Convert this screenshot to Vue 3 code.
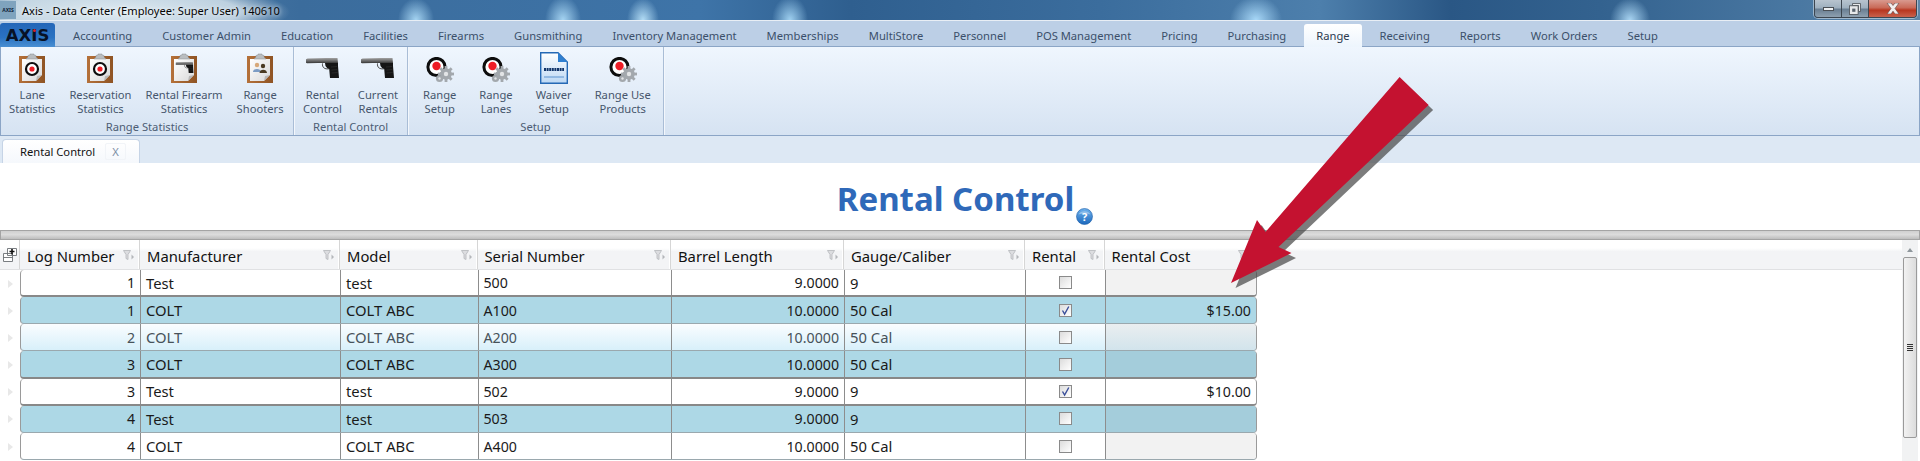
<template>
  <div class="app">
    <!-- shared icon symbols -->
    <svg class="defs" width="0" height="0" aria-hidden="true">
      <defs>
        <linearGradient id="board" x1="0" y1="0" x2="1" y2="0">
          <stop offset="0" stop-color="#b5713a" />
          <stop offset="1" stop-color="#8f5424" />
        </linearGradient>
        <linearGradient id="paper" x1="0" y1="0" x2="1" y2="1">
          <stop offset="0" stop-color="#ffffff" />
          <stop offset="1" stop-color="#d9d9d9" />
        </linearGradient>
        <linearGradient id="slide" x1="0" y1="0" x2="0" y2="1">
          <stop offset="0" stop-color="#a2a2a2" />
          <stop offset=".6" stop-color="#666" />
          <stop offset="1" stop-color="#333" />
        </linearGradient>
        <linearGradient id="doc" x1="0" y1="0" x2="0" y2="1">
          <stop offset="0" stop-color="#ffffff" />
          <stop offset="1" stop-color="#bcd8f4" />
        </linearGradient>
        <linearGradient id="help" x1="0" y1="0" x2="0" y2="1">
          <stop offset="0" stop-color="#6fb2ec" />
          <stop offset="1" stop-color="#1c68bd" />
        </linearGradient>
        <symbol id="clip-base" viewBox="0 0 26 30">
          <rect x="0" y="3" width="26" height="27" fill="url(#board)" />
          <path d="M3 6H23V22L17 28H3Z" fill="url(#paper)" />
          <path d="M23 22L17 28L18 23Z" fill="#b9b9b9" />
          <path d="M9 4V2.5L11 2V1H15V2L17 2.5V4L19 6H7Z" fill="#b9bdc0" stroke="#8a8d90" stroke-width=".5" />
        </symbol>
        <symbol id="gun" viewBox="0 0 33 20">
          <path d="M0 1.2L1.5 .4L20 0H31.5L32 5H12L1 5.2L0 4.8Z" fill="url(#slide)" />
          <path d="M19 5H32L32 8L33 20H24L23.2 11L21.5 10.5L19.5 8Z" fill="#151515" />
          <path d="M16.5 5.4C16 9.5 18.5 11.4 23 10.8" fill="none" stroke="#3a3a3a" stroke-width=".9" />
          <path d="M25 9L31 8.5M25.4 12L31.3 11.5M25.6 15L31.6 14.5" stroke="#333" stroke-width=".6" />
        </symbol>
        <symbol id="gear" viewBox="0 0 28 26">
          <circle cx="10.5" cy="10" r="8.6" fill="#fff" stroke="#0d0d0d" stroke-width="3" />
          <circle cx="10.5" cy="9" r="4.2" fill="#ee1c25" />
          <g fill="#a3a8ad">
            <circle cx="20" cy="17" r="5.8" />
            <circle cx="13.5" cy="21.5" r="3.6" />
            <rect x="18.6" y="9" width="2.8" height="16" />
            <rect x="12" y="15.6" width="16" height="2.8" />
            <rect x="18.6" y="9" width="2.8" height="16" transform="rotate(45 20 17)" />
            <rect x="18.6" y="9" width="2.8" height="16" transform="rotate(-45 20 17)" />
          </g>
          <circle cx="20" cy="17" r="2.2" fill="#e2e4e6" />
          <circle cx="13.5" cy="21.5" r="1.2" fill="#e2e4e6" />
        </symbol>
        <symbol id="funnel" viewBox="0 0 11 11">
          <path d="M.5 .5H7.5L5 4.5V9.5L3 8.5V4.5Z" fill="#dcdde0" stroke="#b4b6ba" stroke-width=".8" />
          <path d="M8.5 4.5L11 7L8.5 9.5Z" fill="#b4b6ba" />
        </symbol>
      </defs>
    </svg>

    <header class="titlebar">
      <span class="app-icon">AXIS</span>
      <span class="window-title">Axis - Data Center  (Employee: Super User) 140610</span>
      <div class="window-controls">
        <span class="ctl ctl--min"><i class="min-bar"></i></span>
        <span class="ctl ctl--max">
          <svg width="12" height="12" viewBox="0 0 12 12">
            <path d="M3.5 .5H11.5V8.5H9.5V2.5H3.5Z" fill="#e6e8ea" stroke="#4a4f55" stroke-width=".8" />
            <rect x=".5" y="2.8" width="8.6" height="8.6" fill="#e6e8ea" stroke="#4a4f55" stroke-width=".8" />
            <rect x="3.2" y="5.6" width="3.2" height="3.2" fill="#59636e" />
          </svg>
        </span>
        <span class="ctl ctl--close">
          <svg width="14" height="11" viewBox="0 0 14 11">
            <path d="M1 0H5L7 2.5L9 0H13L9 5.5L13 11H9L7 8.2L5 11H1L5 5.5Z" fill="#f2eeee" stroke="#5a4040" stroke-width=".6" />
          </svg>
        </span>
      </div>
    </header>

    <nav class="menu">
      <span class="logo-tab">AX<span class="logo-i">I</span>S</span>
      <span
        v-for="item in menuItems"
        :key="item"
        :class="['menu-item', { 'menu-item--active': item === 'Range' }]"
      >{{ item }}</span>
    </nav>

    <section class="ribbon">
      <div v-for="group in groups" :key="group.name" :class="['group', `group--${group.id}`]">
        <div class="group-buttons">
          <button v-for="btn in group.buttons" :key="btn.label" class="rb" type="button">
            <span class="rb-icon">
              <svg v-if="btn.icon === 'gun'" width="33" height="20" viewBox="0 0 33 20"><use href="#gun" /></svg>
              <svg v-else-if="btn.icon === 'gear'" width="28" height="26" viewBox="0 0 28 26" class="ico-gear"><use href="#gear" /></svg>
              <svg v-else-if="btn.icon === 'doc'" width="28" height="32" viewBox="0 0 28 32">
                <path d="M.7 .7H18L27.3 10V31.3H.7Z" fill="url(#doc)" stroke="#2569b5" stroke-width="1.4" />
                <path d="M18 .7V10H27.3Z" fill="#2f7fd0" />
                <path d="M4 17.5H24" stroke="#12356a" stroke-width="3" stroke-dasharray="2 .6" />
                <path d="M4 25H24" stroke="#5c94cf" stroke-width="1" />
              </svg>
              <svg v-else width="26" height="30" viewBox="0 0 26 30">
                <use href="#clip-base" width="26" height="30" />
                <template v-if="btn.icon === 'target'">
                  <circle cx="13" cy="16" r="6" fill="#fff" stroke="#0d0d0d" stroke-width="2.2" />
                  <circle cx="13" cy="16" r="2.6" fill="#ee1c25" />
                </template>
                <g v-else-if="btn.icon === 'clip-gun'" transform="translate(4.5 9) scale(.55)">
                  <use href="#gun" width="33" height="20" />
                </g>
                <g v-else>
                  <circle cx="10" cy="12" r="2.2" fill="#d8a878" />
                  <path d="M6 19C6 15 14 15 14 19Z" fill="#7c9cc4" />
                  <circle cx="16" cy="13" r="2.2" fill="#4a3a22" />
                  <path d="M12.5 20C12.5 15.5 20 15.5 20 20Z" fill="#4a3a22" />
                </g>
              </svg>
            </span>
            <span class="rb-label">{{ btn.label }}</span>
          </button>
        </div>
        <div class="group-name">{{ group.name }}</div>
      </div>
    </section>

    <div class="doc-tabs">
      <div class="doc-tab">
        <span>Rental Control</span>
        <span class="doc-close">X</span>
      </div>
    </div>

    <main class="content">
      <div class="page-title">
        <h1>Rental Control</h1>
        <svg class="help" width="17" height="17" viewBox="0 0 17 17">
          <circle cx="8.5" cy="8.5" r="8" fill="url(#help)" stroke="#1a5ca8" stroke-width=".6" />
          <path d="M2.5 6.5C4 2 13 2 14.5 6.5C11 5 6 5 2.5 6.5Z" fill="#fff" opacity=".35" />
          <text x="8.5" y="12.6" text-anchor="middle" class="help-q">?</text>
        </svg>
      </div>

      <div class="splitter"></div>

      <div class="grid-wrap">
        <div class="grid">
          <div class="grid-head">
            <div class="corner">
              <svg width="14" height="14" viewBox="0 0 14 14">
                <path d="M4.5 .5H13.5V7.5H4.5Z M.5 5.5H9.5V13.5H.5Z M.5 9.5H9.5" fill="#fff" stroke="#6b6f74" stroke-width=".9" />
                <path d="M9 1V6.5M6.5 3.5H11.5" stroke="#111" stroke-width="1.6" />
              </svg>
            </div>
            <div v-for="col in columns" :key="col" class="head-cell">
              <span>{{ col }}</span>
              <svg width="11" height="11" viewBox="0 0 11 11" class="funnel"><use href="#funnel" /></svg>
            </div>
          </div>

          <div v-for="(row, i) in rows" :key="i" class="grid-row">
            <div class="gutter"><i class="marker"></i></div>
            <div :class="['row', `row--${row.tone}`, `row--${row.edge}`]">
              <div class="cell cell--num">{{ row.log }}</div>
              <div class="cell">{{ row.maker }}</div>
              <div class="cell">{{ row.model }}</div>
              <div class="cell cell--digits">{{ row.serial }}</div>
              <div class="cell cell--num">{{ row.barrel }}</div>
              <div class="cell">{{ row.gauge }}</div>
              <div class="cell cell--check">
                <span class="check">
                  <svg v-if="row.rental" width="11" height="11" viewBox="0 0 11 11">
                    <path d="M2.5 5.5L4.6 9L8.8 1.5" fill="none" stroke="#3a4f9a" stroke-width="1.4" />
                  </svg>
                </span>
              </div>
              <div :class="['cell', 'cell--num', 'cell--cost', { 'cell--off': !row.cost }]">{{ row.cost }}</div>
            </div>
          </div>
        </div>

        <div class="scrollbar">
          <i class="sb-up"></i>
          <div class="sb-thumb"><i class="sb-grip"></i></div>
        </div>
      </div>
    </main>

    <!-- callout drawn on top of the screenshot -->
    <svg class="callout" width="1920" height="461" viewBox="0 0 1920 461">
      <polygon :points="arrow" fill="#4a4a4a" opacity=".72" transform="translate(4.5 5)" />
      <polygon :points="arrow" fill="#c41230" />
    </svg>
  </div>
</template>

<script setup>
const arrow = '1399.6,77 1428.6,105 1278.5,247 1291.5,253 1231,283 1257,220 1265.5,232'

const menuItems = [
  'Accounting', 'Customer Admin', 'Education', 'Facilities', 'Firearms', 'Gunsmithing',
  'Inventory Management', 'Memberships', 'MultiStore', 'Personnel', 'POS Management',
  'Pricing', 'Purchasing', 'Range', 'Receiving', 'Reports', 'Work Orders', 'Setup',
]

const groups = [
  {
    id: 'stats',
    name: 'Range Statistics',
    buttons: [
      { label: 'Lane\nStatistics', icon: 'target' },
      { label: 'Reservation\nStatistics', icon: 'target' },
      { label: 'Rental Firearm\nStatistics', icon: 'clip-gun' },
      { label: 'Range\nShooters', icon: 'people' },
    ],
  },
  {
    id: 'rental',
    name: 'Rental Control',
    buttons: [
      { label: 'Rental\nControl', icon: 'gun' },
      { label: 'Current\nRentals', icon: 'gun' },
    ],
  },
  {
    id: 'setup',
    name: 'Setup',
    buttons: [
      { label: 'Range\nSetup', icon: 'gear' },
      { label: 'Range\nLanes', icon: 'gear' },
      { label: 'Waiver\nSetup', icon: 'doc' },
      { label: 'Range Use\nProducts', icon: 'gear' },
    ],
  },
]

const columns = [
  'Log Number', 'Manufacturer', 'Model', 'Serial Number',
  'Barrel Length', 'Gauge/Caliber', 'Rental', 'Rental Cost',
]

const rows = [
  { log: 1, maker: 'Test', model: 'test', serial: '500', barrel: '9.0000', gauge: '9', rental: false, cost: '', tone: 'white', edge: 'heavy' },
  { log: 1, maker: 'COLT', model: 'COLT ABC', serial: 'A100', barrel: '10.0000', gauge: '50 Cal', rental: true, cost: '$15.00', tone: 'blue', edge: 'light' },
  { log: 2, maker: 'COLT', model: 'COLT ABC', serial: 'A200', barrel: '10.0000', gauge: '50 Cal', rental: false, cost: '', tone: 'hover', edge: 'light' },
  { log: 3, maker: 'COLT', model: 'COLT ABC', serial: 'A300', barrel: '10.0000', gauge: '50 Cal', rental: false, cost: '', tone: 'blue', edge: 'heavy' },
  { log: 3, maker: 'Test', model: 'test', serial: '502', barrel: '9.0000', gauge: '9', rental: true, cost: '$10.00', tone: 'white', edge: 'heavy' },
  { log: 4, maker: 'Test', model: 'test', serial: '503', barrel: '9.0000', gauge: '9', rental: false, cost: '', tone: 'blue', edge: 'light' },
  { log: 4, maker: 'COLT', model: 'COLT ABC', serial: 'A400', barrel: '10.0000', gauge: '50 Cal', rental: false, cost: '', tone: 'white', edge: 'light' },
]
</script>

<style>
html, body { margin: 0; background: #fff; overflow: hidden; }
</style>

<style scoped>
.app {
  --cols: 120px 200px 137.5px 193.5px 173px 181px 79.5px 150.5px;
  position: relative;
  width: 1920px;
  height: 461px;
  overflow: hidden;
  display: flex;
  flex-direction: column;
  font-family: "Noto Sans", "Open Sans", sans-serif;
  background: #fff;
}
.defs { position: absolute; }

/* window chrome */
.titlebar {
  height: 20px;
  flex: none;
  display: flex;
  align-items: center;
  border-bottom: 1px solid #e8eef5;
  background:
    radial-gradient(ellipse 18px 22px at 416px 100%, #a5d4f2 0, rgba(165,212,242,0) 100%),
    radial-gradient(ellipse 18px 24px at 563px 100%, #a5d4f2 0, rgba(165,212,242,0) 100%),
    radial-gradient(ellipse 16px 22px at 643px 100%, #b2dcf5 0, rgba(178,220,245,0) 100%),
    radial-gradient(ellipse 18px 24px at 790px 100%, #9fd0f0 0, rgba(159,208,240,0) 100%),
    radial-gradient(ellipse 26px 24px at 1256px 100%, #a8d8f8 0, rgba(168,216,248,0) 100%),
    radial-gradient(ellipse 20px 22px at 1630px 100%, #a8d4f2 0, rgba(168,212,242,0) 100%),
    radial-gradient(ellipse 170px 30px at 120px 60%, rgba(230,240,245,.95) 0, rgba(230,240,245,.75) 70%, rgba(230,240,245,0) 100%),
    linear-gradient(90deg, #5d88ad 0, #3b6c9c 300px, #3e74a8 700px, #2f5f8f 850px, #3b6d9d 1100px, #4d7fac 1320px, #2a5785 1450px, #33628f 1600px, #4a78a2 1800px, #5d86a8 1920px);
}
.app-icon {
  width: 16px;
  height: 18px;
  margin-right: 6px;
  background: #7fa3be;
  color: #10233a;
  font-size: 5px;
  font-weight: 700;
  line-height: 18px;
  text-align: center;
}
.window-title {
  font-size: 11.1px;
  white-space: pre;
  color: #050505;
  text-shadow: 0 0 4px #fff;
}
.window-controls {
  margin-left: auto;
  margin-right: 3px;
  align-self: flex-start;
  display: flex;
  height: 17px;
  border: 1px solid #3d4650;
  border-top: 0;
  border-radius: 0 0 4px 4px;
  box-shadow: 0 0 0 1px rgba(255,255,255,.45);
  overflow: hidden;
}
.ctl {
  display: flex;
  align-items: center;
  justify-content: center;
  height: 17px;
  box-sizing: border-box;
}
.ctl--min, .ctl--max {
  width: 27px;
  border-right: 1px solid #3d4650;
  background: linear-gradient(#b8c4cf 0, #9fb0bf 45%, #6a7f93 55%, #8ea0b0 100%);
}
.ctl--close {
  width: 47px;
  background: linear-gradient(#d99a8f 0, #c96a58 45%, #b8361f 60%, #c9614c 100%);
}
.min-bar {
  width: 11px;
  height: 4px;
  background: #eef0f2;
  border: 1px solid #4a4f55;
  box-sizing: border-box;
}

.menu {
  height: 26px;
  flex: none;
  box-sizing: border-box;
  display: flex;
  align-items: flex-end;
  background: #bccfe6;
  border-bottom: 1px solid #8ba5c6;
}
.logo-tab {
  width: 55px;
  height: 24px;
  margin: 0 3px -1px 0;
  box-sizing: border-box;
  border-radius: 3px 3px 0 0;
  background: linear-gradient(#2466b8, #2a72c2 60%, #4a8fd2);
  font-family: "DejaVu Sans", sans-serif;
  font-weight: 700;
  font-size: 16.5px;
  line-height: 26px;
  text-align: center;
  color: #081226;
}
.logo-i {
  position: relative;
}
.logo-i::before {
  content: "";
  position: absolute;
  left: 1.5px;
  top: 3px;
  width: 3px;
  height: 3px;
  border-radius: 50%;
  background: #d8232a;
}
.menu-item {
  height: 25px;
  padding: 0 15px;
  font-size: 11.2px;
  line-height: 29px;
  color: #3b4f6a;
  white-space: nowrap;
}
.menu-item--active {
  height: 23px;
  margin: 0 3px -1px;
  padding: 0 12px;
  line-height: 24px;
  border-radius: 3px 3px 0 0;
  background: linear-gradient(#fff, #edf5fd);
  color: #2c3a4e;
}

.ribbon {
  height: 89px;
  flex: none;
  box-sizing: border-box;
  display: flex;
  background: linear-gradient(#eff6fe, #d6e3f2);
  border-bottom: 1px solid #8ba5c6;
  border-right: 1px solid #8ba5c6;
  border-left: 1px solid #8ba5c6;
}
.group {
  display: flex;
  flex-direction: column;
  box-sizing: border-box;
  border-right: 1px solid #a9bdd6;
  box-shadow: 1px 0 0 #f3f7fc;
}
.group--stats { width: 293px; }
.group--rental { width: 114px; }
.group--setup { width: 256px; }
.group-buttons {
  flex: 1;
  display: flex;
}
.group--stats .group-buttons { gap: 14px; padding-left: 8px; }
.group--rental .group-buttons { gap: 16px; padding-left: 9px; }
.group--setup .group-buttons { gap: 23px; padding-left: 15px; }
.rb {
  display: flex;
  flex-direction: column;
  align-items: center;
  padding: 0;
  border: 0;
  background: none;
  font: inherit;
  color: #46566c;
}
.rb-icon {
  height: 40px;
  display: flex;
  align-items: center;
  justify-content: center;
  margin-top: 1px;
}
.ico-gear { margin-top: 4px; }
.rb-label {
  font-size: 11.2px;
  line-height: 13.5px;
  white-space: pre-line;
  text-align: center;
}
.group-name {
  height: 15px;
  font-size: 11.2px;
  line-height: 14px;
  text-align: center;
  color: #4c5d74;
}

.doc-tabs {
  height: 27px;
  flex: none;
  box-sizing: border-box;
  padding: 3px 0 0 2px;
  background: #dde8f4;
}
.doc-tab {
  width: 138px;
  height: 24px;
  box-sizing: border-box;
  display: flex;
  align-items: center;
  padding-left: 17px;
  border: 1px solid #c6d4e6;
  border-bottom: 0;
  border-radius: 4px 4px 0 0;
  background: linear-gradient(#fff, #f5f8fc);
  font-size: 11.2px;
  color: #111;
}
.doc-close {
  width: 21px;
  margin-left: 10px;
  box-sizing: border-box;
  border: 1px solid #f1f4f8;
  border-radius: 2px;
  text-align: center;
  color: #7d8fa5;
}

/* page */
.content {
  flex: 1;
  min-height: 0;
  display: flex;
  flex-direction: column;
}
.page-title {
  height: 67px;
  flex: none;
  box-sizing: border-box;
  display: flex;
  justify-content: center;
  align-items: flex-start;
  padding: 16px 0 0 10px;
}
.page-title h1 {
  margin: 0;
  font-size: 33px;
  line-height: 40px;
  font-weight: 700;
  color: #2f69b9;
}
.help {
  margin: 29px 0 0 2px;
}
.help-q {
  font-size: 11px;
  font-weight: 700;
  fill: #fff;
}
.splitter {
  height: 10px;
  flex: none;
  box-sizing: border-box;
  border: 1px solid #a4a4a4;
  background: linear-gradient(#cfcfcf, #dcdcdc 45%, #bdbdbd);
}

.grid-wrap {
  flex: 1;
  min-height: 0;
  display: flex;
}
.grid { flex: 1; min-width: 0; }
.grid-head {
  height: 30px;
  box-sizing: border-box;
  display: grid;
  grid-template-columns: 20px var(--cols) 1fr;
  background: linear-gradient(#fff 0, #fff 28%, #f3f4f6 40%, #f3f4f6 100%);
  border-bottom: 1px solid #e0e1e3;
}
.corner {
  display: flex;
  align-items: center;
  justify-content: center;
  border-right: 1px solid #d6d6d6;
}
.head-cell {
  display: flex;
  align-items: center;
  justify-content: space-between;
  box-sizing: border-box;
  padding: 2px 5px 0 7px;
  border-right: 1px solid #d6d6d6;
  box-shadow: inset -1px 0 0 #fff;
  font-size: 14.8px;
  color: #111;
}
.funnel { flex: none; }
.grid-row {
  height: 27.17px;
  display: flex;
}
.gutter {
  width: 20px;
  flex: none;
  display: flex;
  align-items: center;
  justify-content: center;
}
.marker {
  border-style: solid;
  border-width: 4px 0 4px 5px;
  border-color: transparent transparent transparent #e8e8e8;
}
.row {
  display: grid;
  grid-template-columns: var(--cols);
  box-sizing: border-box;
  border-left: 1px solid #9a9a9a;
  border-right: 1px solid #9a9a9a;
  border-radius: 4px;
}
.row--white { background: #fff; }
.row--blue { background: #add8e6; }
.row--hover { background: linear-gradient(#fafdff, #d8f0fa); }
.row--heavy { border-bottom: 2px solid #888; }
.row--light { border-bottom: 1px solid #9aa8ae; }
.cell {
  box-sizing: border-box;
  display: flex;
  align-items: center;
  padding: 0 5px;
  border-right: 1px solid #8d8d8d;
  font-size: 14.8px;
  color: #1a1a1a;
  overflow: hidden;
}
.row--hover .cell { color: #47525a; }
.cell--num { justify-content: flex-end; font-size: 14.2px; }
.cell--digits { font-size: 14.2px; }
.cell--check { justify-content: center; }
.cell--cost { border-right: 0; border-radius: 0 4px 4px 0; }
.row--white .cell--off { background: #f2f2f2; }
.row--blue .cell--off { background: #a4cddb; }
.row--hover .cell--off { background: linear-gradient(#eaeef0, #d2e4ec); }
.check {
  width: 13px;
  height: 13px;
  box-sizing: border-box;
  display: flex;
  align-items: center;
  justify-content: center;
  border: 1px solid #8a8a8a;
  background: linear-gradient(135deg, #dcdcdc, #fff);
}

.scrollbar {
  width: 16px;
  flex: none;
  box-sizing: border-box;
  margin-right: 2px;
  padding-top: 8px;
  background: #f1f2f3;
  display: flex;
  flex-direction: column;
  align-items: center;
}
.sb-up {
  border-style: solid;
  border-width: 0 3px 4px 3px;
  border-color: transparent transparent #8f979c transparent;
}
.sb-thumb {
  width: 14px;
  height: 181px;
  margin-top: 5px;
  box-sizing: border-box;
  border: 1px solid #9a9a9a;
  border-radius: 2px;
  background: linear-gradient(90deg, #f2f2f2, #dcdcdc);
  display: flex;
  align-items: center;
  justify-content: center;
}
.sb-grip {
  width: 6px;
  height: 7px;
  background: repeating-linear-gradient(#333 0, #333 1px, transparent 1px, transparent 2px);
}

.callout {
  position: absolute;
  left: 0;
  top: 0;
  pointer-events: none;
}
</style>
